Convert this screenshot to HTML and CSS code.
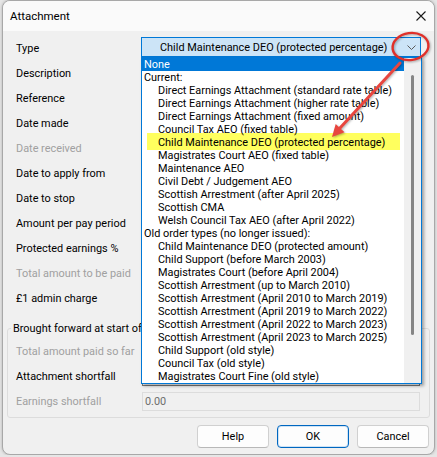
FILE: index.html
```html
<!DOCTYPE html>
<html lang="en">
<head>
    <meta charset="UTF-8">
    <title>Attachment</title>
    <link rel="stylesheet" href="styles.css">
</head>
<body>
    <div class="window">
        <!-- Title bar -->
        <div class="titlebar">
            <span class="title">Attachment</span>
            <span class="close">
                <svg width="10" height="10" viewBox="0 0 10 10">
                    <path d="M0.5 0.5 L9.5 9.5 M9.5 0.5 L0.5 9.5" stroke="#1a1a1a" stroke-width="1.1" fill="none"/>
                </svg>
            </span>
        </div>

        <!-- Main fields -->
        <div class="form">
            <div class="label">Type</div>
            <div class="combo">
                <span class="combo-text">Child Maintenance DEO (protected percentage)</span>
                <svg class="chevron" width="9" height="5" viewBox="0 0 9 5">
                    <path d="M0.5 0.5 L4.5 4.5 L8.5 0.5" stroke="#5a5a5a" stroke-width="1" fill="none"/>
                </svg>
            </div>
            <div class="label">Description</div>
            <div class="field"></div>
            <div class="label">Reference</div>
            <div class="field"></div>
            <div class="label">Date made</div>
            <div class="field"></div>
            <div class="label disabled">Date received</div>
            <div class="field"></div>
            <div class="label">Date to apply from</div>
            <div class="field"></div>
            <div class="label">Date to stop</div>
            <div class="field"></div>
            <div class="label">Amount per pay period</div>
            <div class="field"></div>
            <div class="label">Protected earnings %</div>
            <div class="field"></div>
            <div class="label disabled">Total amount to be paid</div>
            <div class="field"></div>
            <div class="label">£1 admin charge</div>
            <div class="field"></div>
        </div>

        <!-- Brought forward group -->
        <fieldset class="group">
            <legend>Brought forward at start of year</legend>
            <div class="group-grid">
                <div class="label disabled">Total amount paid so far</div>
                <div class="field"></div>
                <div class="label">Attachment shortfall</div>
                <div class="field"></div>
                <div class="label disabled">Earnings shortfall</div>
                <div class="field readonly">0.00</div>
            </div>
        </fieldset>

        <div class="buttons">
            <button>Help</button>
            <button class="default">OK</button>
            <button>Cancel</button>
        </div>

        <!-- Open dropdown list of the Type combo -->
        <div class="list">
            <span class="marker"></span>
            <ul class="items">
                <li class="selected">None</li>
                <li>Current:</li>
                <li class="sub">Direct Earnings Attachment (standard rate table)</li>
                <li class="sub">Direct Earnings Attachment (higher rate table)</li>
                <li class="sub">Direct Earnings Attachment (fixed amount)</li>
                <li class="sub">Council Tax AEO (fixed table)</li>
                <li class="sub">Child Maintenance DEO (protected percentage)</li>
                <li class="sub">Magistrates Court AEO (fixed table)</li>
                <li class="sub">Maintenance AEO</li>
                <li class="sub">Civil Debt / Judgement AEO</li>
                <li class="sub">Scottish Arrestment (after April 2025)</li>
                <li class="sub">Scottish CMA</li>
                <li class="sub">Welsh Council Tax AEO (after April 2022)</li>
                <li>Old order types (no longer issued):</li>
                <li class="sub">Child Maintenance DEO (protected amount)</li>
                <li class="sub">Child Support (before March 2003)</li>
                <li class="sub">Magistrates Court (before April 2004)</li>
                <li class="sub">Scottish Arrestment (up to March 2010)</li>
                <li class="sub">Scottish Arrestment (April 2010 to March 2019)</li>
                <li class="sub">Scottish Arrestment (April 2019 to March 2022)</li>
                <li class="sub">Scottish Arrestment (April 2022 to March 2023)</li>
                <li class="sub">Scottish Arrestment (April 2023 to March 2025)</li>
                <li class="sub">Child Support (old style)</li>
                <li class="sub">Council Tax (old style)</li>
                <li class="sub">Magistrates Court Fine (old style)</li>
            </ul>
            <div class="scrollbar"><span class="thumb"></span></div>
        </div>

        <!-- Red annotation: circle round the drop button, arrow to the chosen item -->
        <svg class="annotation" width="431" height="453" viewBox="0 0 431 453">
            <ellipse cx="407.5" cy="45.5" rx="18" ry="13.5" transform="rotate(-8 407.5 45.5)"
                     fill="none" stroke="#e0302a" stroke-width="2.4"/>
            <line x1="397" y1="62" x2="337" y2="127" stroke="#e8463f" stroke-width="3" stroke-linecap="round"/>
            <polygon points="329,136 341.5,131.3 332.7,123.1" fill="#e8463f"/>
        </svg>
    </div>
</body>
</html>
```
FILE: styles.css
```css
body {
    margin: 0;
    background-color: #e6e6e6;
    font-family: Roboto, "Liberation Sans", sans-serif;
    font-size: 10.9px;
    color: #000;
}
.window {
    position: relative;
    box-sizing: border-box;
    margin-left: 2px;
    width: 433px;
    height: 455px;
    background-color: #f0f0f0;
    border: 1px solid #a8a8a8;
    border-radius: 8px;
    overflow: hidden;
    box-shadow: 0 0 3px rgba(0, 0, 0, 0.25);
}
.titlebar {
    height: 30px;
    display: flex;
    align-items: center;
    justify-content: space-between;
    padding: 0 7px;
    background-color: #fafafa;
    font-size: 11.5px;
}
.close {
    display: flex;
    margin-right: 1px;
}
.form {
    display: grid;
    grid-template-columns: 125px 280px;
    grid-auto-rows: 25px;
    align-items: center;
    padding: 5px 13px 0 13px;
}
.label.disabled {
    color: #a0a0a0;
}
.field {
    box-sizing: border-box;
    height: 19px;
    background-color: #fff;
    border: 1px solid #7a7a7a;
}
.combo {
    box-sizing: border-box;
    height: 20px;
    display: flex;
    align-items: center;
    justify-content: space-between;
    padding: 0 4px 0 18px;
    background-color: #cce4f7;
    border: 1px solid #0078d7;
    align-self: end;
    margin-bottom: 4px;
}
.group {
    margin: 11px 4px 0 4px;
    padding: 4px 9px 3px 8px;
    border: 1px solid #dcdcdc;
    border-radius: 3px;
}
.group legend {
    padding: 0 2px;
    margin-left: -5px;
    line-height: 13px;
}
.group-grid {
    display: grid;
    grid-template-columns: 126px 278px;
    grid-auto-rows: 25px;
    align-items: center;
}
.field.readonly {
    display: flex;
    align-items: center;
    padding-left: 2px;
    background-color: #f0f0f0;
    border-color: #dcdcdc;
    color: #6d6d6d;
}
.buttons {
    display: flex;
    justify-content: flex-end;
    gap: 8px;
    margin-top: 7px;
    padding-right: 5px;
}
.buttons button {
    width: 72px;
    height: 23px;
    font-family: inherit;
    font-size: inherit;
    color: #000;
    background-color: #fdfdfd;
    border: 1px solid #d0d0d0;
    border-bottom-color: #b8b8b8;
    border-radius: 4px;
}
.buttons .default {
    border: 1px solid #0067c0;
    box-shadow: inset 0 0 0 1px #cfe3f5;
}
.list {
    position: absolute;
    z-index: 2;
    left: 138px;
    top: 56px;
    box-sizing: border-box;
    width: 281px;
    height: 327px;
    display: flex;
    background-color: #fff;
    border: 1px solid #0078d7;
    box-shadow: 2px 2px 3px rgba(0, 0, 0, 0.35);
}
.marker {
    position: absolute;
    z-index: -1;
    left: 5px;
    top: 75px;
    width: 253px;
    height: 17px;
    background-color: #ffff5e;
}
.items {
    flex: 1;
    margin: 0;
    padding: 0;
    list-style: none;
}
.items li {
    height: 13px;
    line-height: 13px;
    padding-left: 2px;
    white-space: nowrap;
}
.items li.sub {
    padding-left: 16px;
}
.items li.selected {
    background-color: #0078d7;
    color: #fff;
}
.scrollbar {
    position: relative;
    width: 17px;
    background-color: #f0f0f0;
}
.thumb {
    position: absolute;
    left: 7px;
    top: 17px;
    width: 3px;
    height: 260px;
    border-radius: 2px;
    background-color: #858585;
}
.annotation {
    position: absolute;
    z-index: 3;
    left: 0;
    top: 0;
    filter: drop-shadow(1px 1px 1px rgba(0, 0, 0, 0.3));
}
```
